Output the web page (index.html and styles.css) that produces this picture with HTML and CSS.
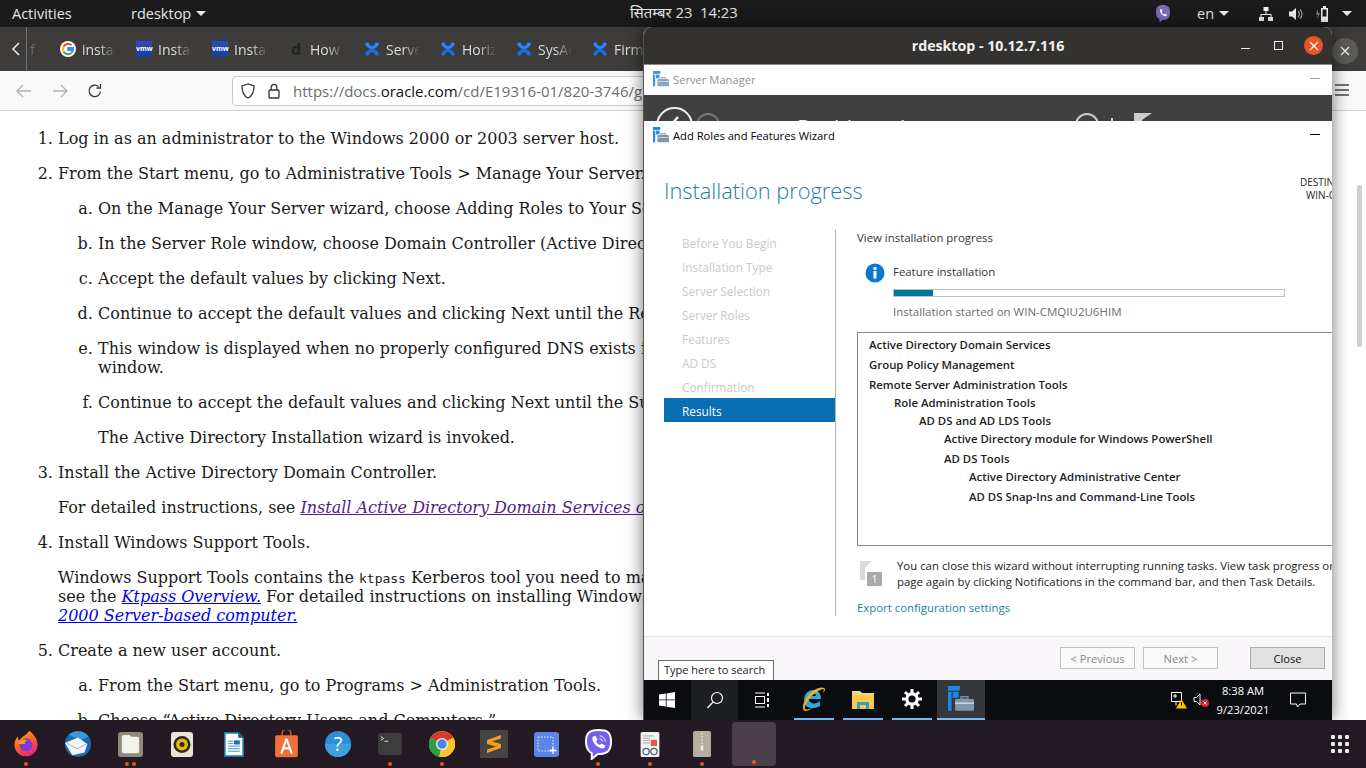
FILE: index.html
```html
<!DOCTYPE html>
<html lang="en">
<head>
  <meta charset="UTF-8" />
  <title>rdesktop - 10.12.7.116</title>
  <link rel="stylesheet" href="styles.css">
</head>
<body>

  <svg class="defs" width="0" height="0">
    <symbol id="ic-conf" viewBox="0 0 16 16">
      <path d="M1 3 Q1.500 1.500 3 1.500 L4.500 1.500 Q6 5 8 5 Q10 5 11.500 1.500 L13 1.500 Q15 1.500 15 3 Q12.500 8 8 8 Q3.500 8 1 3Z" fill="#2684ff"/>
      <path d="M1 13 Q1.500 14.500 3 14.500 L4.500 14.500 Q6 11 8 11 Q10 11 11.500 14.500 L13 14.500 Q15 14.500 15 13 Q12.500 8 8 8 Q3.500 8 1 13Z" fill="#1a6fe0"/>
    </symbol>
    <symbol id="ic-srv" viewBox="0 0 22 22">
      <rect x="0" y="0" width="10" height="4" fill="#1e88e5"/>
      <rect x="0" y="5" width="3" height="16" fill="#1e88e5"/>
      <rect x="4" y="5" width="5" height="5" fill="#1e88e5"/>
      <rect x="6" y="11" width="16" height="10" rx="1" fill="#7d98ad"/>
      <rect x="6" y="14" width="16" height="1" fill="#dfe8ee"/>
      <rect x="11" y="9" width="6" height="2" fill="none" stroke="#7d98ad"/>
    </symbol>
  </svg>

  <header class="topbar">
    <div class="topbar-left">
      <span class="activities">Activities</span>
      <span class="app-name">rdesktop <i class="caret"></i></span>
    </div>
    <div class="clock">सितम्बर 23&nbsp; 14:23</div>
    <div class="tray">
      <svg class="tray-viber" width="18" height="20" viewBox="0 0 18 20">
        <path d="M9 1C4 1 2 3 2 8.500 2 12 3 14 5.500 15L5.500 18.500 8.500 16C14 16 16 14 16 8.500 16 3 14 1 9 1Z" fill="#7d6bb8"/>
        <path d="M6 5.500 7.500 5 8.500 7 7.700 8C8 9 9 10 10 10.500L11 9.600 13 10.700 12.300 12.200C9 12.500 5.500 9 6 5.500Z" fill="#fff"/>
      </svg>
      <span class="tray-lang">en <i class="caret"></i></span>
      <svg class="tray-net" width="16" height="16" viewBox="0 0 16 16" fill="#eee">
        <rect x="5.500" y="1" width="5" height="4"/><rect x="1" y="11" width="5" height="4"/><rect x="10" y="11" width="5" height="4"/>
        <path d="M7.500 5h1v3h5v3h-1V9H3.500v2h-1V8h5z"/>
      </svg>
      <svg class="tray-vol" width="16" height="16" viewBox="0 0 16 16">
        <path d="M1 5.500h3L8 2v12L4 10.500H1z" fill="#eee"/>
        <path d="M10 5a4 4 0 0 1 0 6M12 3.500a6 6 0 0 1 0 9" fill="none" stroke="#999" stroke-width="1.200"/>
      </svg>
      <svg class="tray-bat" width="18" height="18" viewBox="0 0 18 18">
        <path d="M3 4 1 9.500h2L2 14l3-6H3z" fill="#888"/>
        <rect x="8" y="1" width="3" height="2" fill="#eee"/>
        <rect x="6" y="3" width="7" height="14" fill="#eee"/>
        <rect x="7.500" y="4.500" width="4" height="7" fill="#1b1b1b"/>
      </svg>
      <i class="caret tray-caret"></i>
    </div>
  </header>

  <nav class="tabstrip">
    <div class="tab-back">
      <svg width="10" height="16" viewBox="0 0 10 16"><path d="M8 2 2 8l6 6" fill="none" stroke="#eee" stroke-width="1.500"/></svg>
    </div>
    <div class="tab-stub">f</div>
    <div class="tab">
      <svg class="tab-icon" viewBox="0 0 16 16">
        <circle cx="8" cy="8" r="8" fill="#fff"/>
        <path d="M3.500 5.500A5 5 0 0 1 11.500 4.400" fill="none" stroke="#ea4335" stroke-width="2"/>
        <path d="M3.500 5.500A5 5 0 0 0 3.500 10.500" fill="none" stroke="#fbbc05" stroke-width="2"/>
        <path d="M3.500 10.500A5 5 0 0 0 11.500 11.600" fill="none" stroke="#34a853" stroke-width="2"/>
        <path d="M11.500 11.600A5 5 0 0 0 13 7H8.200v2H13" fill="none" stroke="#4285f4" stroke-width="2"/>
      </svg>
      <span class="tab-label">instal</span>
    </div>
    <div class="tab"><span class="tab-vmw">vmw</span><span class="tab-label">Instal</span></div>
    <div class="tab"><span class="tab-vmw">vmw</span><span class="tab-label">Instal</span></div>
    <div class="tab"><span class="tab-d">d</span><span class="tab-label">How t</span></div>
    <div class="tab"><svg class="tab-icon"><use href="#ic-conf"/></svg><span class="tab-label">Server</span></div>
    <div class="tab"><svg class="tab-icon"><use href="#ic-conf"/></svg><span class="tab-label">Horizo</span></div>
    <div class="tab"><svg class="tab-icon"><use href="#ic-conf"/></svg><span class="tab-label">SysAd</span></div>
    <div class="tab"><svg class="tab-icon"><use href="#ic-conf"/></svg><span class="tab-label">Firmw</span></div>
    <div class="tab-close">
      <svg width="10" height="10" viewBox="0 0 10 10"><path d="M1 1l8 8M9 1l-8 8" stroke="#eee" stroke-width="1.300"/></svg>
    </div>
  </nav>

  <div class="toolbar">
    <svg class="tool tool-off" width="18" height="16" viewBox="0 0 18 16"><path d="M16 8H2M8 2 2 8l6 6" fill="none" stroke="currentColor" stroke-width="1.300"/></svg>
    <svg class="tool tool-off" width="18" height="16" viewBox="0 0 18 16"><path d="M2 8h14M10 2l6 6-6 6" fill="none" stroke="currentColor" stroke-width="1.300"/></svg>
    <svg class="tool" width="16" height="16" viewBox="0 0 16 16"><path d="M13.500 8.500A5.700 5.700 0 1 1 11.500 3.500M13.500 1v4h-4" fill="none" stroke="#333" stroke-width="1.300"/></svg>
    <div class="urlbar">
      <svg width="14" height="16" viewBox="0 0 14 16"><path d="M7 1 1 3c0 6 1.500 10 6 12 4.500-2 6-6 6-12z" fill="none" stroke="#333" stroke-width="1.300"/></svg>
      <svg class="url-lock" width="12" height="16" viewBox="0 0 12 16"><rect x="1" y="7" width="10" height="8" rx="1" fill="none" stroke="#333" stroke-width="1.300"/><path d="M3.200 7V4.200a2.800 2.800 0 0 1 5.600 0V7" fill="none" stroke="#333" stroke-width="1.300"/></svg>
      <span class="url-text">https://docs.<b>oracle.com</b>/cd/E19316-01/820-3746/gisdn/index.html</span>
    </div>
    <svg class="tool-menu" width="16" height="14" viewBox="0 0 16 14"><path d="M1 2h14M1 7h14M1 12h14" stroke="#444" stroke-width="1.300"/></svg>
  </div>

  <main class="page">
    <ol class="steps">
      <li>Log in as an administrator to the Windows 2000 or 2003 server host.</li>
      <li>From the Start menu, go to Administrative Tools &gt; Manage Your Server.
        <ol class="substeps">
          <li>On the Manage Your Server wizard, choose Adding Roles to Your Server.</li>
          <li>In the Server Role window, choose Domain Controller (Active Directory).</li>
          <li>Accept the default values by clicking Next.</li>
          <li>Continue to accept the default values and clicking Next until the Roles window.</li>
          <li>This window is displayed when no properly configured DNS exists in the network.<br>window.</li>
          <li>Continue to accept the default values and clicking Next until the Summary.
            <p>The Active Directory Installation wizard is invoked.</p>
          </li>
        </ol>
      </li>
      <li>Install the Active Directory Domain Controller.
        <p>For detailed instructions, see <a class="visited" href="#">Install Active Directory Domain Services on a Server</a></p>
      </li>
      <li>Install Windows Support Tools.
        <p>Windows Support Tools contains the <code>ktpass</code> Kerberos tool you need to map<br>
        see the <a href="#">Ktpass Overview.</a> For detailed instructions on installing Windows Support Tools<br>
        <a href="#">2000 Server-based computer.</a></p>
      </li>
      <li>Create a new user account.
        <ol class="substeps">
          <li>From the Start menu, go to Programs &gt; Administration Tools.</li>
          <li>Choose “Active Directory Users and Computers.”</li>
        </ol>
      </li>
    </ol>
    <div class="scrollthumb"></div>
  </main>

  <footer class="dock">
    <div class="dock-item"><svg width="28" height="28" viewBox="0 0 34 34">
      <defs><linearGradient id="ffx" x1="0" y1="0" x2="0.500" y2="1"><stop offset="0" stop-color="#ffbd2e"/><stop offset="0.500" stop-color="#ff6a1f"/><stop offset="1" stop-color="#f0267a"/></linearGradient></defs>
      <path d="M21 1c4 3 10 9 10 17a14 14 0 0 1-28 0C3 14 5 10 7 8c0 3 1 4 2 5 2-5 7-5 12-12Z" fill="url(#ffx)"/>
      <circle cx="17" cy="18" r="8" fill="#7b3fd0"/><path d="M8 13c3-2 8-2 11 0-3 0-4 2-3 4H8z" fill="#ff9a1f"/>
    </svg><span class="pips"><i></i></span></div>
    <div class="dock-item"><svg width="28" height="28" viewBox="0 0 30 30">
      <circle cx="15" cy="15" r="14" fill="#1f69b3"/><path d="M5 5c6-5 16-5 21 2l-8 4z" fill="#3d97dc"/>
      <path d="M1 14 15 8l10 7-3 9-13 3z" fill="#f2f4f7"/><path d="M3 14l11 6 10-5" fill="none" stroke="#a8b3c0"/>
    </svg><span class="pips"></span></div>
    <div class="dock-item"><svg width="25" height="25" viewBox="0 0 26 26">
      <rect width="26" height="26" rx="3" fill="#8f8a7c"/><path d="M4 5q0-2 2-2h6l2 2h6q2 0 2 2v13q0 2-2 2H6q-2 0-2-2z" fill="#f4f2ec"/>
    </svg><span class="pips"><i></i><i></i></span></div>
    <div class="dock-item"><svg width="22" height="25" viewBox="0 0 22 25">
      <rect width="22" height="25" rx="3" fill="#e8e4d8"/><circle cx="11" cy="12.500" r="8.500" fill="#2c2a25"/><circle cx="11" cy="12.500" r="6" fill="#e7b811"/><circle cx="11" cy="12.500" r="2.500" fill="#2c2a25"/>
    </svg><span class="pips"></span></div>
    <div class="dock-item"><svg width="22" height="25" viewBox="0 0 24 30">
      <path d="M1 1h16l6 6v22H1z" fill="#fff" stroke="#1b7aa6" stroke-width="2"/><path d="M17 1l6 6h-6z" fill="#1b5e80"/>
      <path d="M5 11h6M5 14h6M5 17h14M5 20h14M5 23h14" stroke="#1b7aa6"/><rect x="12" y="10" width="7" height="5" fill="#2a6f94"/>
    </svg><span class="pips"></span></div>
    <div class="dock-item"><svg width="25" height="28" viewBox="0 0 26 32">
      <path d="M8 7V4a5 5 0 0 1 10 0v3" fill="none" stroke="#e95420" stroke-width="1.500"/>
      <rect y="6" width="26" height="25" rx="2" fill="#f0703a"/><path d="M13 10 7 27M13 10l6 17M8 21h10" stroke="#fff" stroke-width="2.400" fill="none"/>
    </svg><span class="pips"></span></div>
    <div class="dock-item"><svg width="26" height="26" viewBox="0 0 26 26">
      <circle cx="13" cy="13" r="13" fill="#2e8fd8"/><path d="M0 13a13 13 0 0 0 26 0z" fill="#3f9fe0" />
      <text x="13" y="20" class="dock-q">?</text>
    </svg><span class="pips"></span></div>
    <div class="dock-item"><svg width="24" height="22" viewBox="0 0 26 24">
      <rect width="26" height="24" rx="3" fill="#3d3d3d"/><path d="M3 4l3 2-3 2M7 9h4" fill="none" stroke="#eee" stroke-width="1"/>
    </svg><span class="pips"><i></i></span></div>
    <div class="dock-item"><svg width="26" height="26" viewBox="0 0 28 28">
      <circle cx="14" cy="14" r="14" fill="#e0a800"/>
      <path d="M14 14 2 7A14 14 0 0 1 26 7Z" fill="#d8372b"/>
      <path d="M14 14 2 7A14 14 0 0 0 11 28Z" fill="#2f9e44"/>
      <path d="M14 14 26 7A14 14 0 0 1 11 28Z" fill="#fbc62d"/>
      <circle cx="14" cy="14" r="6.500" fill="#e8eef8"/><circle cx="14" cy="14" r="5" fill="#4a85e8"/>
    </svg><span class="pips"><i></i></span></div>
    <div class="dock-item"><svg width="28" height="28" viewBox="0 0 28 28">
      <rect width="28" height="28" rx="1" fill="#444"/><path d="M21 5 7 10v4l14 4v-4l-9-2.500 9-3zM7 23l14-5v-4L7 10v4l9 2.500-9 3z" fill="#f79a1c"/>
    </svg><span class="pips"></span></div>
    <div class="dock-item"><svg width="25" height="25" viewBox="0 0 25 25">
      <rect width="25" height="25" rx="3" fill="#5b86e8"/>
      <rect x="4" y="5" width="15" height="14" fill="none" stroke="#e8eefc" stroke-dasharray="1.500 1.500"/><path d="M19 15v7M15.500 18.500h7" stroke="#fff" stroke-width="1.300"/>
    </svg><span class="pips"></span></div>
    <div class="dock-item"><svg width="27" height="31" viewBox="0 0 28 32">
      <path d="M14 1C5 1 1 4 1 13c0 7 2 10 6 12v6l6-5c10 0 14-3 14-13S23 1 14 1Z" fill="#7360f2" stroke="#fff" stroke-width="2"/>
      <path d="M8 8l3-1 2 4-1.500 1.500c1 2 2.500 3.500 4 4l1.500-1.500 4 2-1 3C14 21 6 14 8 8Z" fill="#fff"/>
      <path d="M15 7a6 6 0 0 1 6 6M15 10a3 3 0 0 1 3 3" fill="none" stroke="#fff"/>
    </svg><span class="pips"><i></i></span></div>
    <div class="dock-item"><svg width="22" height="25" viewBox="0 0 24 32">
      <rect width="24" height="32" rx="2" fill="#f2f2f0"/><path d="M3 5h14M3 8h9M3 11h9M3 14h9" stroke="#999"/><rect x="13" y="10" width="8" height="8" fill="#e05a4a"/>
      <circle cx="7" cy="25" r="4" fill="none" stroke="#3b5f80" stroke-width="1.500"/><circle cx="17" cy="25" r="4" fill="none" stroke="#3b5f80" stroke-width="1.500"/>
    </svg><span class="pips"><i></i></span></div>
    <div class="dock-item"><svg width="22" height="26" viewBox="0 0 22 32">
      <rect width="22" height="32" rx="2" fill="#b5b09e"/><path d="M11 2v16" stroke="#eee" stroke-width="1.500" stroke-dasharray="2 2"/><rect x="9.500" y="18" width="3" height="6" fill="#eee"/>
    </svg><span class="pips"><i></i></span></div>
    <div class="dock-item dock-active"><span class="pips"><i></i></span></div>
    <svg class="dock-grid" width="18" height="18" viewBox="0 0 18 18" fill="#e8e8e8">
      <rect width="4" height="4" rx="1"/><rect x="7" width="4" height="4" rx="1"/><rect x="14" width="4" height="4" rx="1"/>
      <rect y="7" width="4" height="4" rx="1"/><rect x="7" y="7" width="4" height="4" rx="1"/><rect x="14" y="7" width="4" height="4" rx="1"/>
      <rect y="14" width="4" height="4" rx="1"/><rect x="7" y="14" width="4" height="4" rx="1"/><rect x="14" y="14" width="4" height="4" rx="1"/>
    </svg>
  </footer>

  <!-- the rdesktop window floats over the browser -->
  <section class="rd-window">
    <div class="rd-title">
      <span class="rd-name">rdesktop - 10.12.7.116</span>
      <div class="rd-buttons">
        <i class="rd-min"></i>
        <i class="rd-max"></i>
        <span class="rd-close"><svg width="10" height="10" viewBox="0 0 10 10"><path d="M1 1l8 8M9 1l-8 8" stroke="#fff" stroke-width="1.300"/></svg></span>
      </div>
    </div>

    <div class="sm-title">
      <svg class="win-icon faded"><use href="#ic-srv"/></svg>
      <span>Server Manager</span>
      <i class="win-min"></i>
    </div>
    <div class="sm-band">
      <span class="sm-back"><svg width="18" height="18" viewBox="0 0 18 18"><path d="M12 1 5 9h10" fill="none" stroke="#eee" stroke-width="2.500"/></svg></span>
      <span class="sm-forward"></span>
      <span class="sm-heading">Dashboard</span>
      <span class="sm-refresh"></span>
      <span class="sm-pipe"></span>
      <svg class="sm-flag" width="18" height="14" viewBox="0 0 18 14"><path d="M0 0h18L8 7v7H0z" fill="#ccc"/></svg>
    </div>

    <div class="wizard">
      <div class="wiz-title">
        <svg class="win-icon"><use href="#ic-srv"/></svg>
        <span>Add Roles and Features Wizard</span>
        <i class="win-min dark"></i>
      </div>
      <div class="wiz-head">
        <h1>Installation progress</h1>
        <div class="wiz-dest">DESTINATION SERVER<br><span>WIN-CMQIU2U6HIM</span></div>
      </div>
      <div class="wiz-main">
        <ul class="wiz-nav">
          <li>Before You Begin</li>
          <li>Installation Type</li>
          <li>Server Selection</li>
          <li>Server Roles</li>
          <li>Features</li>
          <li>AD DS</li>
          <li>Confirmation</li>
          <li class="current">Results</li>
        </ul>
        <div class="wiz-body">
          <div class="wiz-view">View installation progress</div>
          <div class="feature">
            <svg width="20" height="20" viewBox="0 0 20 20"><circle cx="10" cy="10" r="9.500" fill="#0a78d0"/><rect x="8.500" y="8" width="3" height="7.500" fill="#fff"/><rect x="8.500" y="4" width="3" height="2.800" fill="#fff"/></svg>
            <div class="feature-info">
              <div>Feature installation</div>
              <div class="progress"><div class="progress-fill"></div></div>
              <div class="feature-note">Installation started on WIN-CMQIU2U6HIM</div>
            </div>
          </div>
          <div class="results">
            <div class="lv0">Active Directory Domain Services</div>
            <div class="lv0 gap2">Group Policy Management</div>
            <div class="lv0 gap2">Remote Server Administration Tools</div>
            <div class="lv1">Role Administration Tools</div>
            <div class="lv2">AD DS and AD LDS Tools</div>
            <div class="lv3">Active Directory module for Windows PowerShell</div>
            <div class="lv3 gap2">AD DS Tools</div>
            <div class="lv4">Active Directory Administrative Center</div>
            <div class="lv4 gap2">AD DS Snap-Ins and Command-Line Tools</div>
          </div>
          <div class="note">
            <svg class="note-icon" width="24" height="26" viewBox="0 0 24 26">
              <path d="M1 1h12L6 8v12H1z" fill="#d9d9d9"/>
              <rect x="8" y="12" width="15" height="14" fill="#a9a9a9"/>
              <text x="15.500" y="23" class="note-num">1</text>
            </svg>
            <p>You can close this wizard without interrupting running tasks. View task progress or open this<br>page again by clicking Notifications in the command bar, and then Task Details.</p>
          </div>
          <a class="export" href="#">Export configuration settings</a>
        </div>
      </div>
      <div class="wiz-foot">
        <button class="off">&lt; Previous</button>
        <button class="off">Next &gt;</button>
        <button class="close">Close</button>
      </div>
      <div class="search-tip">Type here to search</div>
    </div>

    <div class="taskbar">
      <svg class="tb-start" width="16" height="16" viewBox="0 0 16 16" fill="#fff"><path d="M0 2.500 6.800 1.500V7.500H0zM7.600 1.400 16 0V7.500H7.600zM0 8.300H6.800V14.500L0 13.500zM7.600 8.300H16V16L7.600 14.700z"/></svg>
      <div class="tb-search"><svg width="18" height="18" viewBox="0 0 18 18"><circle cx="11" cy="7" r="5.500" fill="none" stroke="#fff" stroke-width="1.200"/><path d="M7 11 1.500 17" stroke="#fff" stroke-width="1.200"/></svg></div>
      <svg class="tb-view" width="16" height="16" viewBox="0 0 16 16"><path d="M1 1h10M1 15h10" stroke="#fff"/><rect x="1.500" y="4.500" width="9" height="7" fill="none" stroke="#fff"/><path d="M14 1v3M14 6v4M14 12v3" stroke="#fff" stroke-width="2"/></svg>
      <div class="tb-app first"><svg width="24" height="26" viewBox="0 0 24 26">
        <path d="M2 15c0-7 4-11 9-11 5 0 8 3 8 9H7c0 5 7 6 11 2v5c-7 4-16 2-16-5Zm5-5h7c0-4-6-4-7 0Z" fill="#2fa8e8"/>
        <path d="M22 2c-4-2-12 2-17 9S0 24 3 25c2 0 5-1 8-3-3 1-7 2-8 1s1-6 5-11 11-9 13-9c1 0 1 2 0 4 2-2 3-4 1-5Z" fill="#e8b516"/>
      </svg></div>
      <div class="tb-app"><svg width="22" height="20" viewBox="0 0 22 20">
        <path d="M0 2h8l2 2h12v16H0z" fill="#f7d774"/><rect y="6" width="22" height="14" fill="#f9c94c"/>
        <path d="M5 20v-7h12v7h-3v-4H8v4z" fill="#2b9fd8"/>
      </svg></div>
      <div class="tb-app last"><svg width="20" height="20" viewBox="0 0 20 20">
        <circle cx="10" cy="10" r="5.200" fill="none" stroke="#fff" stroke-width="3.200"/>
        <path d="M10 0v4M10 16v4M0 10h4M16 10h4M3 3l2.800 2.800M14.200 14.200 17 17M17 3l-2.800 2.800M5.800 14.200 3 17" stroke="#fff" stroke-width="3"/>
      </svg></div>
      <div class="tb-app active"><svg width="26" height="26"><use href="#ic-srv"/></svg></div>
      <div class="tb-tray">
        <svg width="17" height="18" viewBox="0 0 17 18">
          <path d="M1.500 1.500h10v9h-10zM4 4h2v2H4zM6 10.500v4" fill="none" stroke="#fff"/>
          <path d="M11.500 8 17 17.500H6z" fill="#f7c600"/><rect x="11" y="11" width="1" height="3.500" fill="#000"/>
        </svg>
        <svg width="16" height="16" viewBox="0 0 16 16">
          <path d="M1 5.500h2.500L7 2v11L3.500 9.500H1z" fill="none" stroke="#fff"/>
          <circle cx="12" cy="11" r="4" fill="#d8232a"/><path d="M10.500 9.500l3 3M13.500 9.500l-3 3" stroke="#fff"/>
        </svg>
        <div class="tb-clock">8:38 AM<br>9/23/2021</div>
        <svg class="tb-notify" width="16" height="16" viewBox="0 0 16 16"><path d="M.5 1h15v11H10l-2.500 3-1-3h-6z" fill="none" stroke="#fff"/></svg>
      </div>
    </div>
  </section>

</body>
</html>
```

FILE: styles.css
```css
* {
  box-sizing: border-box;
}

html, body {
  margin: 0;
  height: 100%;
}

body {
  width: 1366px;
  height: 768px;
  overflow: hidden;
  position: relative;
  display: flex;
  flex-direction: column;
  background: #fff;
  font-family: 'Open Sans', 'Noto Sans', sans-serif;
}

.defs {
  position: absolute;
}

i {
  font-style: normal;
}

/* gnome top bar */
.topbar {
  height: 27px;
  flex: none;
  background: #1b1b1b;
  color: #e6e6e6;
  font-size: 14.500px;
  display: flex;
  align-items: center;
  position: relative;
}

.topbar-left {
  display: flex;
  align-items: center;
}

.activities {
  margin-left: 12px;
  width: 119px;
}

.app-name {
  display: flex;
  align-items: center;
  gap: 1px;
}

.caret {
  display: inline-block;
  width: 0;
  height: 0;
  margin-left: 4px;
  border-left: 5px solid transparent;
  border-right: 5px solid transparent;
  border-top: 5px solid #e6e6e6;
}

.clock {
  position: absolute;
  left: 630px;
  top: 2px;
  font-size: 14.800px;
  white-space: nowrap;
}

.tray {
  margin-left: auto;
  display: flex;
  align-items: center;
}

.tray-viber {
  margin-right: 25px;
}

.tray-lang {
  width: 61px;
  display: flex;
  align-items: center;
  gap: 1px;
}

.tray-net {
  margin-right: 14px;
}

.tray-vol {
  margin-right: 11px;
}

.tray-bat {
  margin-right: 9px;
}

.tray-caret {
  margin: 0 14px 0 0;
}

/* browser tabs */
.tabstrip {
  height: 44px;
  flex: none;
  background: #3d3c3a;
  color: #ddd;
  font-size: 14px;
  display: flex;
  align-items: center;
}

.tab-back {
  width: 27px;
  height: 100%;
  border-right: 1px solid #77736c;
  display: flex;
  align-items: center;
  padding-left: 11px;
}

.tab-stub {
  width: 33px;
  padding-left: 3px;
  color: #6d6c69;
}

.tab {
  width: 76px;
  flex: none;
  display: flex;
  align-items: center;
  gap: 6px;
  overflow: hidden;
}

.tab-icon {
  width: 16px;
  height: 16px;
  flex: none;
}

.tab-vmw {
  width: 16px;
  height: 16px;
  flex: none;
  background: linear-gradient(#2b4fb8, #1a3c9c);
  color: #fff;
  font-size: 7px;
  font-weight: 700;
  line-height: 15px;
  text-align: center;
}

.tab-d {
  width: 16px;
  flex: none;
  color: #232321;
  font-size: 16px;
  font-weight: 700;
  line-height: 16px;
  text-align: center;
}

.tab-label {
  width: 37px;
  overflow: hidden;
  white-space: nowrap;
  -webkit-mask-image: linear-gradient(90deg, #000 45%, transparent 92%);
  mask-image: linear-gradient(90deg, #000 45%, transparent 92%);
}

.tab-close {
  margin-left: auto;
  margin-right: 8px;
  width: 26px;
  height: 26px;
  margin-top: 4px;
  border-radius: 50%;
  background: #5c5b59;
  display: flex;
  align-items: center;
  justify-content: center;
}

/* browser toolbar */
.toolbar {
  height: 40px;
  flex: none;
  background: #f9f9fa;
  border-bottom: 1px solid #cfcfd1;
  display: flex;
  align-items: center;
  position: relative;
  padding-left: 5px;
}

.tool {
  margin-left: 10px;
  margin-right: 8px;
  flex: none;
}

.tool-off {
  color: #b1b1b3;
}

.urlbar {
  position: absolute;
  left: 232px;
  top: 5px;
  width: 900px;
  height: 30px;
  background: #fff;
  border: 1px solid #c9c9cb;
  border-radius: 4px;
  display: flex;
  align-items: center;
  padding-left: 8px;
  font-size: 15px;
  color: #6b6b6d;
  white-space: nowrap;
}

.url-lock {
  margin-left: 13px;
}

.url-text {
  margin-left: 13px;
}

.url-text b {
  font-weight: 400;
  color: #111;
}

.tool-menu {
  position: absolute;
  left: 1334px;
  top: 12px;
}

/* document */
.page {
  flex: 1;
  overflow: hidden;
  position: relative;
  font-family: 'DejaVu Serif', serif;
  font-size: 16px;
  line-height: 19px;
  color: #1a1a1a;
  padding-top: 18px;
}

.steps {
  margin: 0;
  padding-left: 58px;
  white-space: nowrap;
}

.steps li {
  margin-bottom: 16px;
}

.substeps {
  margin: 16px 0 0;
  padding-left: 40px;
  list-style: lower-alpha;
}

.page p {
  margin: 16px 0 0;
}

.page a {
  color: #0000ee;
  font-style: italic;
}

.page a.visited {
  color: #551a8b;
}

.page code {
  font-family: 'DejaVu Sans Mono', monospace;
  font-size: 13px;
  line-height: 1;
}

.scrollthumb {
  position: absolute;
  left: 1357px;
  top: 74px;
  width: 5px;
  height: 162px;
  background: #cdcdcd;
  border-radius: 3px;
}

/* ubuntu dock */
.dock {
  height: 48px;
  flex: none;
  background: #241a24;
  display: flex;
  align-items: stretch;
  position: relative;
  z-index: 2;
}

.dock-item {
  width: 52px;
  flex: none;
  display: flex;
  flex-direction: column;
  align-items: center;
  justify-content: center;
  position: relative;
}

.dock-q {
  fill: #fff;
  font-size: 20px;
  text-anchor: middle;
  font-family: 'Open Sans', sans-serif;
}

.pips {
  position: absolute;
  bottom: 2px;
  left: 0;
  right: 0;
  display: flex;
  justify-content: center;
  gap: 3px;
}

.pips i {
  width: 4px;
  height: 4px;
  border-radius: 50%;
  background: #e95420;
}

.dock-active {
  margin: 2px 4px;
  width: 44px;
  background: #4a3f48;
  border-radius: 4px;
}

.dock-grid {
  position: absolute;
  left: 1331px;
  top: 15px;
}

/* rdesktop window */
.rd-window {
  position: absolute;
  left: 643px;
  top: 27px;
  width: 689px;
  height: 693px;
  border-radius: 8px 8px 0 0;
  background: #fff;
  overflow: hidden;
  box-shadow: 0 0 18px rgba(0,0,0,0.55);
  display: flex;
  flex-direction: column;
  z-index: 1;
  border-left: 1px solid #55534f;
  font-size: 11.400px;
}

.rd-title {
  height: 38px;
  flex: none;
  background: #333231;
  color: #f2f2f2;
  font-size: 14.200px;
  font-weight: 700;
  position: relative;
  display: flex;
  align-items: center;
  justify-content: center;
  border-bottom: 1px solid #8a8986;
}

.rd-buttons {
  position: absolute;
  right: 9px;
  top: 9px;
  display: flex;
  align-items: center;
}

.rd-min {
  width: 9px;
  height: 1px;
  background: #eee;
  margin: 6px 24px 0 0;
}

.rd-max {
  width: 9px;
  height: 9px;
  border: 1px solid #eee;
  margin: 0 21px 0 0;
}

.rd-close {
  width: 19px;
  height: 19px;
  border-radius: 50%;
  background: #e95420;
  display: flex;
  align-items: center;
  justify-content: center;
}

.win-icon {
  width: 16px;
  height: 16px;
  flex: none;
}

.win-icon.faded {
  opacity: 0.85;
}

.sm-title,
.wiz-title {
  height: 30px;
  flex: none;
  display: flex;
  align-items: center;
  padding: 0 0 2px 9px;
  gap: 4px;
  position: relative;
  font-size: 11.200px;
}

.sm-title {
  color: #8f8f8f;
}

.wiz-title {
  color: #000;
}

.win-min {
  position: absolute;
  right: 12px;
  top: 13px;
  width: 10px;
  height: 1px;
  background: #a0a0a0;
}

.win-min.dark {
  background: #000;
}

.sm-band {
  height: 26px;
  flex: none;
  background: #404040;
  overflow: hidden;
  position: relative;
  display: flex;
  align-items: flex-start;
  padding: 12px 0 0 12px;
  color: #eee;
}

.sm-back {
  width: 37px;
  height: 37px;
  border: 2px solid #eee;
  border-radius: 50%;
  flex: none;
  padding: 7px 0 0 8px;
}

.sm-forward {
  width: 24px;
  height: 24px;
  margin: 6px 0 0 3px;
  border: 2px solid #777;
  border-radius: 50%;
  flex: none;
}

.sm-heading {
  font-size: 21px;
  line-height: 32px;
  margin: 5px 0 0 77px;
  width: 278px;
}

.sm-refresh {
  width: 24px;
  height: 24px;
  border: 2px solid #ccc;
  border-radius: 50%;
  margin-top: 6px;
  flex: none;
}

.sm-pipe {
  width: 2px;
  height: 14px;
  background: #ddd;
  margin: 11px 0 0 12px;
}

.sm-flag {
  margin: 6px 0 0 21px;
}

/* wizard dialog */
.wizard {
  flex: 1;
  background: #fff;
  position: relative;
  display: flex;
  flex-direction: column;
}

.wiz-head {
  height: 79px;
  flex: none;
  position: relative;
  padding: 25px 0 0 20px;
}

.wiz-head h1 {
  margin: 0;
  font-size: 21.800px;
  line-height: 30px;
  font-weight: 300;
  color: #1a7fa8;
}

.wiz-dest {
  position: absolute;
  left: 656px;
  top: 25px;
  width: 130px;
  font-size: 10px;
  line-height: 13px;
  color: #222;
  white-space: nowrap;
}

.wiz-dest span {
  margin-left: 6px;
}

.wiz-main {
  height: 386px;
  flex: none;
  display: flex;
  padding-left: 20px;
}

.wiz-nav {
  list-style: none;
  margin: 0;
  padding: 0;
  width: 172px;
  height: 100%;
  border-right: 1px solid #b5b5b5;
  flex: none;
  font-size: 11.800px;
}

.wiz-nav li {
  height: 24px;
  padding: 2px 0 0 18px;
  line-height: 22px;
  color: #c9c9c9;
}

.wiz-nav li.current {
  width: 171px;
  background: #0a6eb4;
  color: #fff;
}

.wiz-body {
  flex: 1;
  padding-left: 21px;
  white-space: nowrap;
  min-width: 0;
  color: #333;
}

.wiz-view {
  line-height: 16px;
  color: #333;
}

.feature {
  display: flex;
  gap: 8px;
  margin: 17px 0 0 8px;
}

.feature-info {
  line-height: 16px;
  padding-top: 1px;
}

.progress {
  width: 392px;
  height: 8px;
  margin: 9px 0 7px;
  border: 1px solid #bdbdbd;
  background: #fff;
}

.progress-fill {
  width: 39px;
  height: 100%;
  background: #00779d;
}

.feature-note {
  color: #6d6d6d;
  font-size: 11.500px;
}

.results {
  margin-top: 12px;
  width: 520px;
  height: 214px;
  border: 1px solid #8a8a92;
  padding: 3px 0 0 11px;
  line-height: 18px;
  font-weight: 600;
  color: #222;
}

.lv1 { padding-left: 25px; }
.lv2 { padding-left: 50px; }
.lv3 { padding-left: 75px; }
.lv4 { padding-left: 100px; }
.gap2 { margin-top: 2px; }

.note {
  display: flex;
  margin-top: 12px;
  height: 30px;
}

.note-icon {
  margin: 2px 0 0 2px;
  flex: none;
}

.note p {
  margin: 0 0 0 14px;
  line-height: 16px;
  color: #222;
  font-size: 11.400px;
}

.note-num {
  fill: #fff;
  font-size: 10px;
  text-anchor: middle;
}

.export {
  display: block;
  margin-top: 12px;
  color: #1a7fa8;
  text-decoration: none;
}

.wiz-foot {
  flex: 1;
  display: flex;
  margin-top: 20px;
  padding: 10px 0 0 416px;
  gap: 8px;
  border-top: 1px solid #e6e4e6;
  background: #f8f6f8;
}

.wiz-foot button {
  width: 75px;
  height: 22px;
  font: inherit;
  font-size: 11.200px;
  padding: 0;
  border: 1px solid #adadad;
  background: #f5f5f5;
  color: #111;
}

.wiz-foot button.off {
  color: #8a8a8a;
  border-color: #c2c2c2;
  background: #f8f8f8;
}

.wiz-foot button.close {
  margin-left: 24px;
  background: #e1e1e1;
}

.search-tip {
  position: absolute;
  left: 14px;
  bottom: 0;
  width: 116px;
  height: 20px;
  background: #fff;
  border: 1px solid #6a6a6a;
  border-bottom: none;
  font-size: 11px;
  line-height: 18px;
  padding-left: 5px;
  color: #222;
}

/* windows taskbar inside the session */
.taskbar {
  height: 40px;
  flex: none;
  background: #0a0c10;
  display: flex;
  align-items: center;
  color: #fff;
  font-size: 11.200px;
}

.tb-start {
  margin-left: 15px;
  flex: none;
}

.tb-search {
  margin-left: 16px;
  width: 47px;
  height: 40px;
  background: #1e1f22;
  display: flex;
  align-items: center;
  justify-content: center;
}

.tb-view {
  margin-left: 16px;
  flex: none;
}

.tb-app {
  width: 40px;
  height: 40px;
  margin-right: 9px;
  flex: none;
  display: flex;
  align-items: center;
  justify-content: center;
  border-bottom: 2px solid #76b9ed;
}

.tb-app.first {
  margin-left: 24px;
}

.tb-app.last {
  margin-right: 5px;
}

.tb-app.active {
  width: 48px;
  margin-right: 0;
  background: #34373c;
}

.tb-tray {
  margin-left: auto;
  display: flex;
  align-items: center;
  gap: 6px;
  padding-right: 26px;
}

.tb-clock {
  width: 60px;
  margin-left: -2px;
  text-align: center;
  line-height: 19px;
}

.tb-notify {
  margin-left: 11px;
}
```
